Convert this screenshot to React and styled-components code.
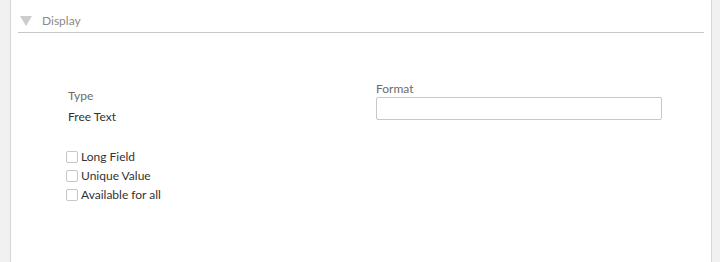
import React from "react";
import styled, { createGlobalStyle } from "styled-components";

const Global = createGlobalStyle`
  html, body { margin: 0; padding: 0; background: #fff; }
  body { font-family: Lato, "Open Sans", "Liberation Sans", sans-serif; }
`;

const Page = styled.div`
  display: flex;
  height: 262px;
  width: 720px;
  overflow: hidden;
`;

const Gutter = styled.div`
  width: ${(p) => p.$w}px;
  background: #f1f1f1;
  ${(p) => (p.$side === "left" ? "border-right" : "border-left")}: 1px solid #d6d6d6;
  flex: none;
`;

const Panel = styled.div`
  flex: 1;
  background: #fff;
  padding: 0 7px;
  min-width: 0;
`;

const Header = styled.div`
  display: flex;
  align-items: center;
  height: 24px;
  margin-top: 8px;
  border-bottom: 1px solid #c8c8c8;
  padding-left: 2px;
  gap: 10px;
`;

const Caret = styled.span`
  width: 0;
  height: 0;
  border-left: 6px solid transparent;
  border-right: 6px solid transparent;
  border-top: 10px solid #cccccc;
  margin-top: 1px;
`;

const HeaderTitle = styled.span`
  font-size: 12px;
  color: #8a8a8a;
`;

const Body = styled.div`
  display: flex;
  align-items: flex-start;
  padding-left: 47px;
`;

const LeftCol = styled.div`
  width: 311px;
  padding-top: 55px;
  display: flex;
  flex-direction: column;
`;

const RightCol = styled.div`
  width: 286px;
  padding-top: 48px;
  display: flex;
  flex-direction: column;
`;

const Label = styled.div`
  font-size: 12px;
  line-height: 15px;
  color: #6b6b6b;
  padding-left: ${(p) => p.$indent || 0}px;
`;

const Value = styled.div`
  font-size: 12px;
  line-height: 15px;
  color: #333;
  padding-left: 3px;
  margin-top: 6px;
`;

const Checks = styled.div`
  display: flex;
  flex-direction: column;
  gap: 7px;
  margin-top: 27px;
  padding-left: 1px;
`;

const CheckRow = styled.label`
  display: flex;
  align-items: center;
  gap: 3px;
  font-size: 12px;
  line-height: 12px;
  color: #333;
  height: 12px;
`;

const Box = styled.span`
  width: 10px;
  height: 10px;
  border: 1px solid #c6c6c6;
  border-radius: 2px;
  background: #fff;
  flex: none;
`;

const Input = styled.input`
  margin-top: 1px;
  height: 23px;
  box-sizing: border-box;
  width: 286px;
  border: 1px solid #c8c8c8;
  border-radius: 2px;
  outline: none;
  font-family: inherit;
  font-size: 12px;
  padding: 0 6px;
`;

export default function App() {
  return (
    <>
      <Global />
      <Page>
        <Gutter $w={10} $side="left" />
        <Panel>
          <Header>
            <Caret />
            <HeaderTitle>Display</HeaderTitle>
          </Header>
          <Body>
            <LeftCol>
              <Label $indent={3}>Type</Label>
              <Value>Free Text</Value>
              <Checks>
                {["Long Field", "Unique Value", "Available for all"].map((t) => (
                  <CheckRow key={t}>
                    <Box />
                    {t}
                  </CheckRow>
                ))}
              </Checks>
            </LeftCol>
            <RightCol>
              <Label>Format</Label>
              <Input type="text" />
            </RightCol>
          </Body>
        </Panel>
        <Gutter $w={8} $side="right" />
      </Page>
    </>
  );
}
